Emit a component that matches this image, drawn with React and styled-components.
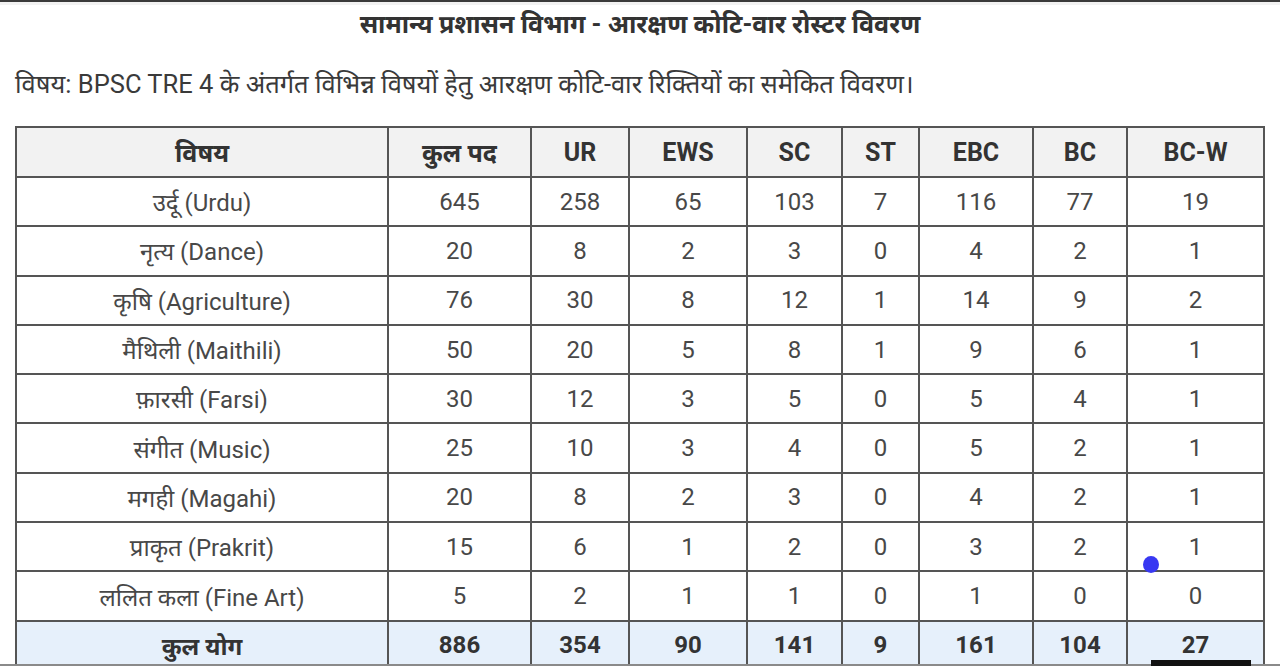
import React from "react";
import styled, { createGlobalStyle } from "styled-components";

const GlobalStyle = createGlobalStyle`
  html, body {
    margin: 0;
    padding: 0;
    background: #ffffff;
  }
  body {
    font-family: "Roboto", "Noto Sans", "Noto Sans Devanagari", "Liberation Sans", sans-serif;
    color: #333;
  }
`;

const Page = styled.div`
  position: relative;
  width: 1280px;
  height: 666px;
  overflow: hidden;
  background: #fff;
  border-top: 2px solid #3a3a3a;
  box-sizing: border-box;
`;

const TopShade = styled.div`
  height: 3px;
  background: #f2f2f2;
`;

const Title = styled.h2`
  margin: 4px 0 0;
  text-align: center;
  font-size: 25px;
  line-height: 32px;
  font-weight: 700;
  color: #333;
`;

const Subtitle = styled.p`
  margin: 28px 0 0 15px;
  font-size: 25.5px;
  line-height: 30px;
  color: #3a3a3a;
`;

const Table = styled.table`
  margin: 27px 0 0 15px;
  width: 1248px;
  border-collapse: collapse;
  table-layout: fixed;
  font-size: 24px;
`;

const HeadCell = styled.th`
  height: 48px;
  padding: 0;
  border: 2px solid #555;
  background: #f2f2f2;
  color: #333;
  font-size: 25px;
  font-weight: 700;
  text-align: center;
`;

const Row = styled.tr`
  background: ${(p) => (p.$total ? "#e6f0fb" : "#fff")};
`;

const Cell = styled.td`
  height: 47.3px;
  padding: 0;
  border: 2px solid #555;
  text-align: center;
  color: ${(p) => (p.$total ? "#333" : "#484848")};
  font-weight: ${(p) => (p.$total ? 700 : 400)};
`;

const Dot = styled.div`
  position: absolute;
  left: 1143px;
  top: 554px;
  width: 16px;
  height: 17px;
  border-radius: 50%;
  background: #3838f2;
`;

const BottomEdge = styled.div`
  position: absolute;
  left: 0;
  right: 0;
  bottom: 0;
  height: 2px;
  background: #8a8a8a;
`;

const BlackBar = styled.div`
  position: absolute;
  left: 1151px;
  bottom: 0;
  width: 100px;
  height: 6px;
  background: #111;
`;

const widths = [372, 143, 98, 118, 95, 77, 114, 94, 137];
const headers = ["विषय", "कुल पद", "UR", "EWS", "SC", "ST", "EBC", "BC", "BC-W"];

const rows = [
  ["उर्दू (Urdu)", 645, 258, 65, 103, 7, 116, 77, 19],
  ["नृत्य (Dance)", 20, 8, 2, 3, 0, 4, 2, 1],
  ["कृषि (Agriculture)", 76, 30, 8, 12, 1, 14, 9, 2],
  ["मैथिली (Maithili)", 50, 20, 5, 8, 1, 9, 6, 1],
  ["फ़ारसी (Farsi)", 30, 12, 3, 5, 0, 5, 4, 1],
  ["संगीत (Music)", 25, 10, 3, 4, 0, 5, 2, 1],
  ["मगही (Magahi)", 20, 8, 2, 3, 0, 4, 2, 1],
  ["प्राकृत (Prakrit)", 15, 6, 1, 2, 0, 3, 2, 1],
  ["ललित कला (Fine Art)", 5, 2, 1, 1, 0, 1, 0, 0],
];

const total = ["कुल योग", 886, 354, 90, 141, 9, 161, 104, 27];

export default function App() {
  return (
    <>
      <GlobalStyle />
      <Page>
        <TopShade />
        <Title>सामान्य प्रशासन विभाग - आरक्षण कोटि-वार रोस्टर विवरण</Title>
        <Subtitle>
          विषय: BPSC TRE 4 के अंतर्गत विभिन्न विषयों हेतु आरक्षण कोटि-वार रिक्तियों का समेकित विवरण।
        </Subtitle>
        <Table>
          <colgroup>
            {widths.map((w, i) => (
              <col key={i} style={{ width: w }} />
            ))}
          </colgroup>
          <thead>
            <tr>
              {headers.map((h) => (
                <HeadCell key={h}>{h}</HeadCell>
              ))}
            </tr>
          </thead>
          <tbody>
            {rows.map((r) => (
              <Row key={r[0]}>
                {r.map((v, i) => (
                  <Cell key={i}>{v}</Cell>
                ))}
              </Row>
            ))}
            <Row $total>
              {total.map((v, i) => (
                <Cell key={i} $total>
                  {v}
                </Cell>
              ))}
            </Row>
          </tbody>
        </Table>
        <Dot />
        <BottomEdge />
        <BlackBar />
      </Page>
    </>
  );
}
